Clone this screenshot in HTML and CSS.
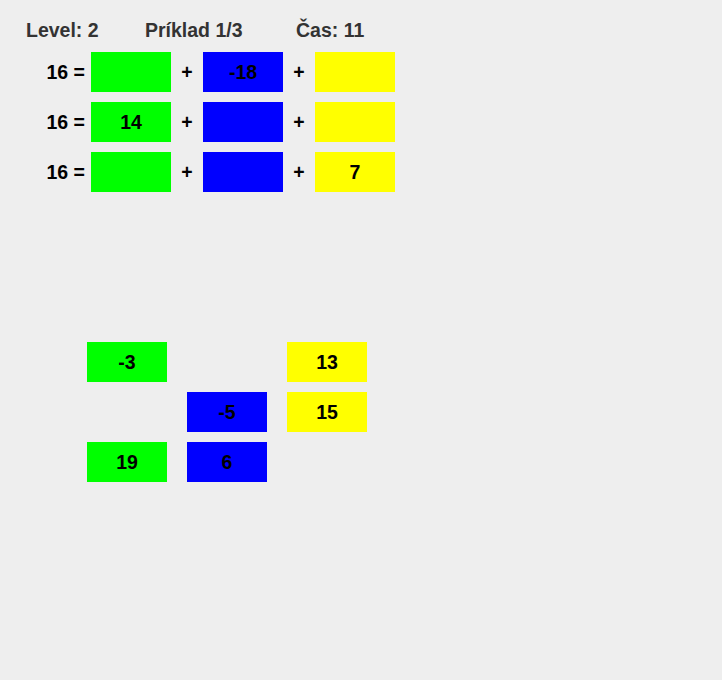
FILE: index.html
```html
<!DOCTYPE html>
<html lang="sk">
<head>
<meta charset="utf-8">
<title>Level</title>
<link rel="stylesheet" href="styles.css">
</head>
<body>
<div class="header">
  <span class="h-level">Level: 2</span>
  <span class="h-example">Príklad 1/3</span>
  <span class="h-time">Čas: 11</span>
</div>
<div class="equations">
  <div class="eq">
    <span class="lhs">16 =</span>
    <span class="box green"></span>
    <span class="op">+</span>
    <span class="box blue">-18</span>
    <span class="op">+</span>
    <span class="box yellow"></span>
  </div>
  <div class="eq">
    <span class="lhs">16 =</span>
    <span class="box green">14</span>
    <span class="op">+</span>
    <span class="box blue"></span>
    <span class="op">+</span>
    <span class="box yellow"></span>
  </div>
  <div class="eq">
    <span class="lhs">16 =</span>
    <span class="box green"></span>
    <span class="op">+</span>
    <span class="box blue"></span>
    <span class="op">+</span>
    <span class="box yellow">7</span>
  </div>
</div>
<div class="pieces">
  <span class="box green">-3</span>
  <span class="empty"></span>
  <span class="box yellow">13</span>
  <span class="empty"></span>
  <span class="box blue">-5</span>
  <span class="box yellow">15</span>
  <span class="box green">19</span>
  <span class="box blue">6</span>
  <span class="empty"></span>
</div>
</body>
</html>
```
FILE: styles.css
```css
html, body {
  margin: 0;
  padding: 0;
}
body {
  background: #eeeeee;
  font-family: "Liberation Sans", Arial, sans-serif;
  font-weight: bold;
  font-size: 19.5px;
  color: #000;
  width: 722px;
  height: 680px;
  overflow: hidden;
}
.header {
  display: flex;
  margin-top: 20px;
  padding-left: 26px;
  line-height: 20px;
  color: #333333;
}
.h-level { width: 119px; }
.h-example { width: 151px; }
.equations {
  margin-top: 12px;
  display: flex;
  flex-direction: column;
  gap: 10px;
}
.eq {
  display: flex;
  align-items: center;
  height: 40px;
}
.lhs {
  width: 85px;
  text-align: right;
  margin-right: 6px;
}
.op {
  width: 32px;
  text-align: center;
}
.box {
  width: 80px;
  height: 40px;
  line-height: 40px;
  text-align: center;
  display: block;
}
.green { background: #00ff00; }
.blue { background: #0000ff; }
.yellow { background: #ffff00; }
.pieces {
  margin-top: 150px;
  margin-left: 87px;
  display: grid;
  grid-template-columns: 80px 80px 80px;
  grid-auto-rows: 40px;
  column-gap: 20px;
  row-gap: 10px;
}
```
